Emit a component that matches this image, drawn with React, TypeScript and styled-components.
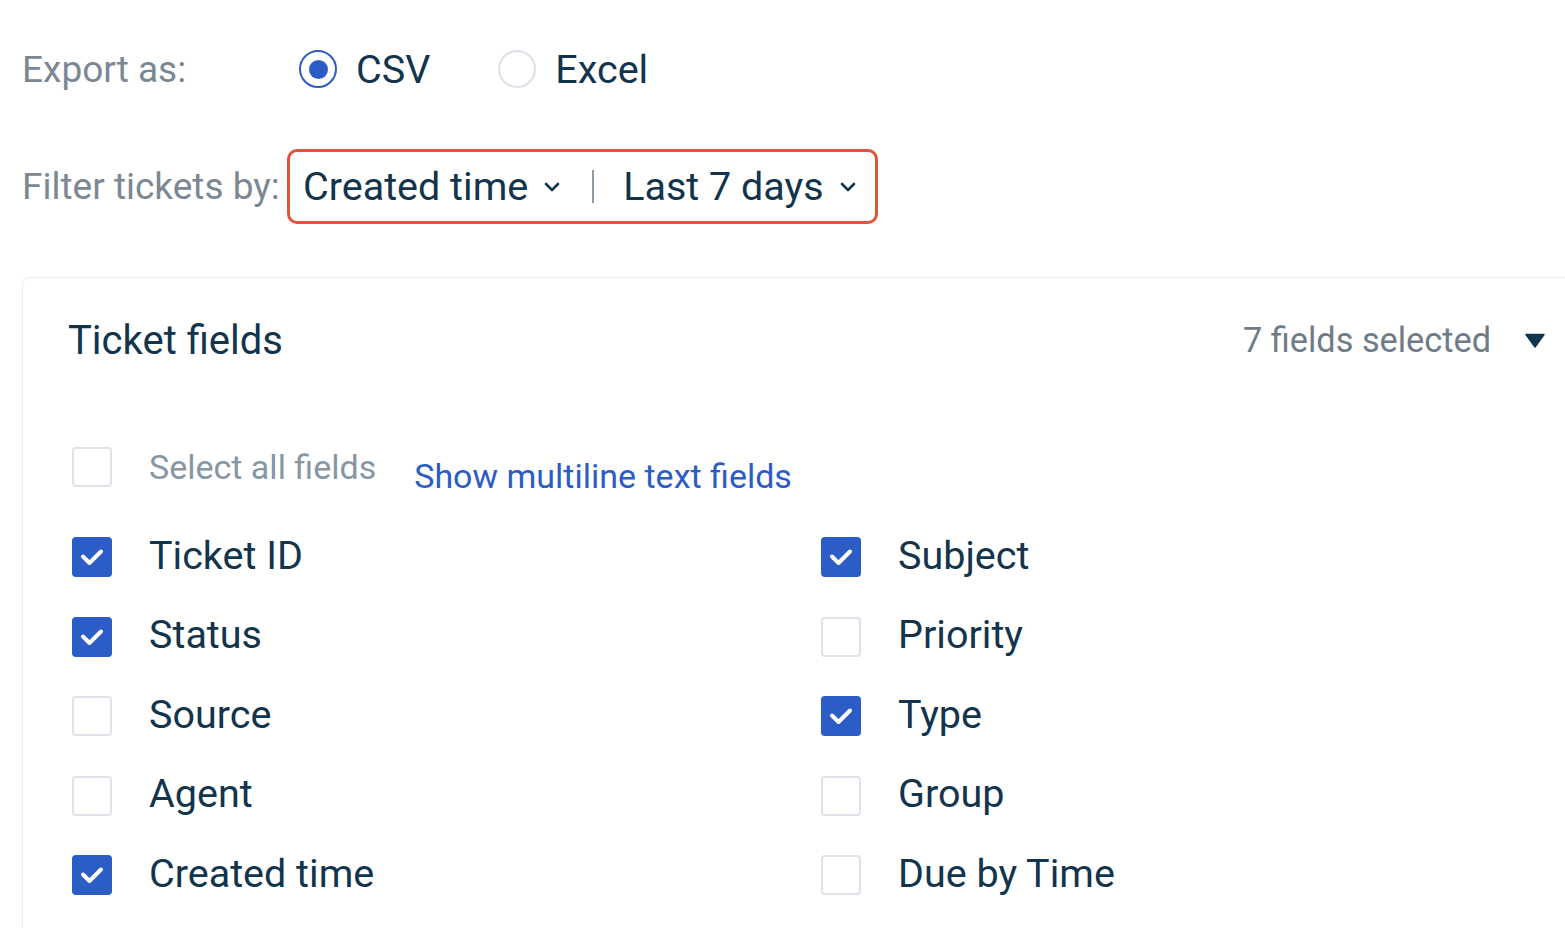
import React from "react";
import styled, { createGlobalStyle } from "styled-components";

const GlobalStyle = createGlobalStyle`
  html, body {
    margin: 0;
    padding: 0;
    background: #ffffff;
    overflow: hidden;
  }
  body {
    font-family: Roboto, "Liberation Sans", sans-serif;
    color: #12344d;
  }
`;

const Page = styled.div`
  width: 1565px;
  height: 928px;
  padding-left: 22px;
  box-sizing: border-box;
  overflow: hidden;
`;

const OptionRow = styled.div<{ $top: number; $height: number }>`
  display: flex;
  align-items: center;
  margin-top: ${(p) => p.$top}px;
  height: ${(p) => p.$height}px;
`;

const RowLabel = styled.div<{ $width: number }>`
  width: ${(p) => p.$width}px;
  flex-shrink: 0;
  font-size: 37px;
  color: #7b8894;
  white-space: nowrap;
`;

const RadioOption = styled.label`
  display: flex;
  align-items: center;
  gap: 19px;
  margin-right: 68px;
  font-size: 39.5px;
  color: #12344d;
`;

const RadioCircle = styled.span<{ $checked?: boolean }>`
  width: 38px;
  height: 38px;
  box-sizing: border-box;
  border-radius: 50%;
  border: 2.5px solid ${(p) => (p.$checked ? "#2c5cc5" : "#dbe1e7")};
  display: flex;
  align-items: center;
  justify-content: center;

  &::after {
    content: "";
    width: 19px;
    height: 19px;
    border-radius: 50%;
    background: ${(p) => (p.$checked ? "#2c5cc5" : "transparent")};
  }
`;

const FilterBox = styled.div`
  display: flex;
  align-items: center;
  height: 75px;
  box-sizing: border-box;
  margin-left: 10px;
  padding: 0 18px 0 13px;
  border: 3px solid #e2533d;
  border-radius: 10px;
`;

const FilterSelect = styled.div`
  display: flex;
  align-items: center;
  gap: 15px;
  font-size: 39.5px;
  color: #12344d;
`;

const Divider = styled.span`
  width: 2px;
  height: 33px;
  background: #8d9aa6;
  margin: 0 29px 0 31px;
`;

const Card = styled.div`
  margin-top: 53px;
  margin-right: -40px;
  border: 1.5px solid #ebeff3;
  border-right: none;
  border-radius: 8px 0 0 8px;
  padding: 31px 60px 0 45px;
  height: 700px;
`;

const CardHeader = styled.div`
  display: flex;
  align-items: center;
  justify-content: space-between;
  height: 62px;
`;

const CardTitle = styled.div`
  font-size: 40px;
  color: #12344d;
`;

const SelectedCount = styled.div`
  display: flex;
  align-items: center;
  gap: 34px;
  font-size: 34.3px;
  color: #6f7c87;
`;

const SelectAllRow = styled.div`
  display: flex;
  align-items: center;
  margin-top: 76px;
  margin-left: 4px;
  height: 40px;
`;

const SelectAllLabel = styled.span`
  font-size: 34px;
  color: #8796a3;
  margin-left: 37px;
  margin-right: 38px;
`;

const LinkText = styled.a`
  font-size: 34px;
  color: #2c5cc5;
  text-decoration: none;
  position: relative;
  top: 9px;
`;

const FieldGrid = styled.div`
  display: grid;
  grid-template-columns: 749px 1fr;
  row-gap: 39.6px;
  margin-top: 50px;
  margin-left: 4px;
`;

const FieldItem = styled.label`
  display: flex;
  align-items: center;
  gap: 37px;
  height: 40px;
  font-size: 39.5px;
  color: #12344d;
`;

const Box = styled.span<{ $checked?: boolean }>`
  width: 40px;
  height: 40px;
  flex-shrink: 0;
  box-sizing: border-box;
  border-radius: 4px;
  background: ${(p) => (p.$checked ? "#2c5cc5" : "#ffffff")};
  border: ${(p) => (p.$checked ? "none" : "2px solid #dde3e9")};
  display: flex;
  align-items: center;
  justify-content: center;
`;

const FieldLabel = styled.span`
  position: relative;
  top: -2px;
`;

const Chevron = () => (
  <svg width="18" height="12" viewBox="0 0 18 12" fill="none">
    <polyline
      points="3,3 9,9 15,3"
      stroke="#12344d"
      strokeWidth="2.6"
      strokeLinecap="round"
      strokeLinejoin="round"
    />
  </svg>
);

const Triangle = () => (
  <svg width="20" height="15" viewBox="0 0 20 15">
    <path d="M1 1.5 L19 1.5 L10 14 Z" fill="#12344d" strokeLinejoin="round" stroke="#12344d" strokeWidth="1.5" />
  </svg>
);

const Check = () => (
  <svg width="40" height="40" viewBox="0 0 40 40" fill="none">
    <polyline
      points="11,19.5 17.5,26 29,14.5"
      stroke="#ffffff"
      strokeWidth="4"
      strokeLinecap="round"
      strokeLinejoin="round"
    />
  </svg>
);

const Checkbox = ({ checked }: { checked?: boolean }) => (
  <Box $checked={checked}>{checked && <Check />}</Box>
);

const fields: [string, boolean][] = [
  ["Ticket ID", true],
  ["Subject", true],
  ["Status", true],
  ["Priority", false],
  ["Source", false],
  ["Type", true],
  ["Agent", false],
  ["Group", false],
  ["Created time", true],
  ["Due by Time", false],
];

export default function App() {
  return (
    <Page>
      <GlobalStyle />
      <OptionRow $top={31} $height={76}>
        <RowLabel $width={277}>Export as:</RowLabel>
        <RadioOption>
          <RadioCircle $checked />
          CSV
        </RadioOption>
        <RadioOption>
          <RadioCircle />
          Excel
        </RadioOption>
      </OptionRow>

      <OptionRow $top={42} $height={75}>
        <RowLabel $width={255}>Filter tickets by:</RowLabel>
        <FilterBox>
          <FilterSelect>
            Created time
            <Chevron />
          </FilterSelect>
          <Divider />
          <FilterSelect>
            Last 7 days
            <Chevron />
          </FilterSelect>
        </FilterBox>
      </OptionRow>

      <Card>
        <CardHeader>
          <CardTitle>Ticket fields</CardTitle>
          <SelectedCount>
            7 fields selected
            <Triangle />
          </SelectedCount>
        </CardHeader>

        <SelectAllRow>
          <Checkbox />
          <SelectAllLabel>Select all fields</SelectAllLabel>
          <LinkText href="#">Show multiline text fields</LinkText>
        </SelectAllRow>

        <FieldGrid>
          {fields.map(([name, checked]) => (
            <FieldItem key={name}>
              <Checkbox checked={checked} />
              <FieldLabel>{name}</FieldLabel>
            </FieldItem>
          ))}
        </FieldGrid>
      </Card>
    </Page>
  );
}
